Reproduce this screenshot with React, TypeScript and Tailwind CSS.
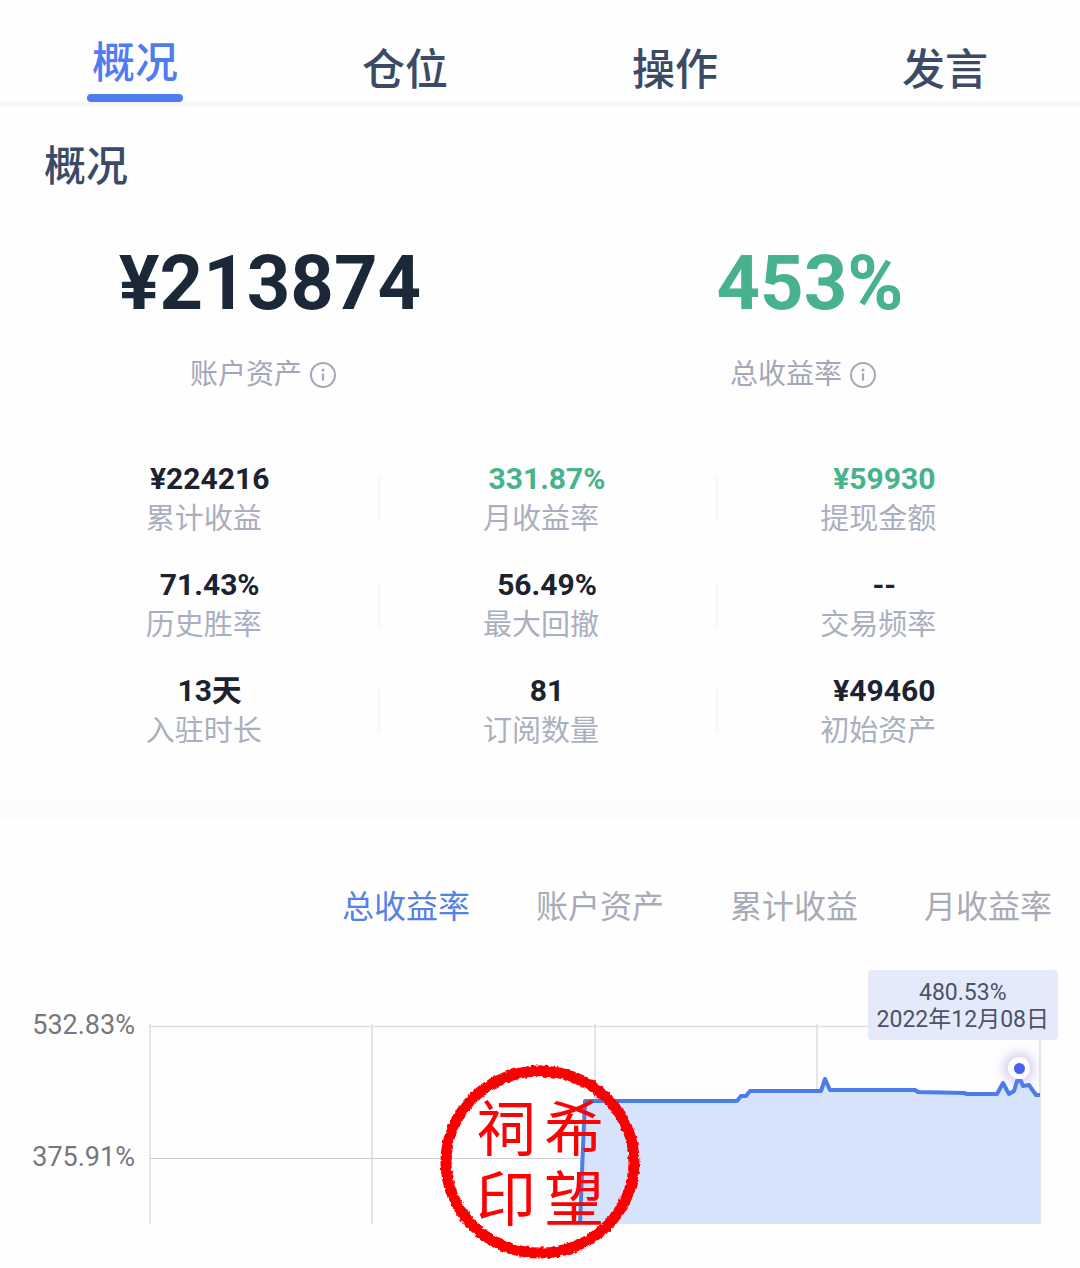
import { useState } from 'react'
import clsx from 'clsx'

interface Stat {
  value: string
  label: string
  positive?: boolean
}

const TABS = ['概况', '仓位', '操作', '发言']
const CHART_TABS = ['总收益率', '账户资产', '累计收益', '月收益率']

const STATS: Stat[] = [
  { value: '¥224216', label: '累计收益' },
  { value: '331.87%', label: '月收益率', positive: true },
  { value: '¥59930', label: '提现金额', positive: true },
  { value: '71.43%', label: '历史胜率' },
  { value: '56.49%', label: '最大回撤' },
  { value: '--', label: '交易频率' },
  { value: '13天', label: '入驻时长' },
  { value: '81', label: '订阅数量' },
  { value: '¥49460', label: '初始资产' },
]

// plot space is 890 x 198
const GRID_X = [0, 222, 445, 667, 890]
const LINE =
  '430,198 433,120 435,75 587,75 591,70 596,70 600,65 671,65 675,53 680,64 765,64 768,66 814,67 817,68 847,68 853,57 859,68 864,65 867,55 871,55 873,60 879,59 886,69 890,69'

function InfoIcon() {
  return (
    <svg viewBox="0 0 26 26" className="h-[26px] w-[26px]" fill="none" aria-hidden="true">
      <circle cx="13" cy="13" r="12" stroke="currentColor" strokeWidth="2" />
      <circle cx="13" cy="8" r="1.5" fill="currentColor" />
      <path d="M13 11.5v7" stroke="currentColor" strokeWidth="2.2" />
    </svg>
  )
}

function Headline({ value, label, positive }: Stat) {
  return (
    <div className="flex flex-col items-center">
      <strong
        className={clsx('text-[76px] leading-[86px] font-bold', positive ? 'text-[#47b28b]' : 'text-[#1b2837]')}
      >
        {value}
      </strong>
      <div className="mt-7 flex items-center gap-2 pr-3.5 text-[#a3a8b8]">
        <span className="text-[28px] leading-[42px]">{label}</span>
        <button type="button" aria-label={`${label}说明`}>
          <InfoIcon />
        </button>
      </div>
    </div>
  )
}

function Stamp() {
  return (
    <div className="absolute top-[104px] left-1/2 h-[196px] w-[200px] -translate-x-1/2 text-[#fb0204]">
      <svg viewBox="0 0 200 196" className="absolute inset-0 h-full w-full overflow-visible" fill="none">
        <filter id="rough" x="-5%" y="-5%" width="110%" height="110%">
          <feTurbulence type="fractalNoise" baseFrequency="0.25" numOctaves="3" seed="4" />
          <feDisplacementMap in="SourceGraphic" scale="4" xChannelSelector="R" yChannelSelector="G" />
        </filter>
        <ellipse cx="100" cy="98" rx="94" ry="91" stroke="currentColor" strokeWidth="11" filter="url(#rough)" />
      </svg>
      <div className="relative grid h-full grid-cols-[68px_68px] grid-rows-[70px_70px] place-content-center place-items-center pt-2 text-[60px] leading-none">
        <span>祠</span>
        <span>希</span>
        <span>印</span>
        <span>望</span>
      </div>
    </div>
  )
}

function Chart() {
  return (
    <div className="relative flex h-[308px] pt-[66px] pr-10">
      <div className="w-[150px] pr-[15px] text-right text-[27px] text-[#76787d]">
        <div className="-mt-5 h-[132px] leading-[38px]">532.83%</div>
        <div className="leading-[38px]">375.91%</div>
      </div>
      <div className="relative h-[198px] flex-1">
        <svg viewBox="0 0 890 198" preserveAspectRatio="none" className="h-full w-full overflow-visible">
          <g stroke="#dfdfe2" strokeWidth="1.6">
            {GRID_X.map((x) => (
              <line key={x} x1={x} x2={x} y1="-2" y2="198" />
            ))}
            <line x1="0" x2="890" y1="0.5" y2="0.5" />
            <line x1="0" x2="890" y1="132.5" y2="132.5" stroke="#cfcfd2" strokeWidth="1.2" />
          </g>
          <polygon points={`${LINE} 890,198`} fill="#d6e3fa" />
          <polyline points={LINE} fill="none" stroke="#4a7de9" strokeWidth="4" strokeLinejoin="round" />
        </svg>
        {/* Selected point */}
        <div className="absolute top-[31px] right-[10px] flex h-[22px] w-[22px] items-center justify-center rounded-full bg-white shadow-[0_0_12px_4px_rgba(150,120,220,0.4)]">
          <span className="h-[11px] w-[11px] rounded-full bg-[#4b5fee]" />
        </div>
        <div className="absolute -top-14 -right-[18px] rounded-sm bg-[#e4eafa] px-[9px] pt-[9px] pb-[7px] text-center text-[23px] leading-[27px] whitespace-nowrap text-[#4b5365]">
          <div>480.53%</div>
          <div>2022年12月08日</div>
        </div>
      </div>
      <Stamp />
    </div>
  )
}

export default function App() {
  const [tab, setTab] = useState(TABS[0])
  const [chartTab, setChartTab] = useState(CHART_TABS[0])

  return (
    <main className="min-h-screen bg-[#fefefe] font-['Roboto','Noto_Sans_CJK_SC',sans-serif]">
      <nav className="grid h-[106px] grid-cols-4 border-b-4 border-[#f5f7fa]">
        {TABS.map((t) => (
          <button
            key={t}
            type="button"
            onClick={() => setTab(t)}
            className={clsx(
              'flex flex-col items-center text-[43px] leading-[60px] font-medium',
              t === tab ? 'pt-[33px] text-[#4f7cf3]' : 'pt-10 text-[#3b4a66]',
            )}
          >
            {t}
            {t === tab && <span className="mt-px h-2 w-24 shrink-0 rounded-full bg-[#4f7cf3]" />}
          </button>
        ))}
      </nav>

      <section className="pb-[49px]">
        <h2 className="px-11 pt-[31px] text-[42px] leading-[60px] font-medium text-[#3b4a66]">概况</h2>
        <div className="mt-[43px] grid grid-cols-2">
          <Headline value="¥213874" label="账户资产" />
          <Headline value="453%" label="总收益率" positive />
        </div>

        <div className="mt-[63px] grid grid-cols-3 gap-y-[26px] pr-6 pl-11">
          {STATS.map((s, i) => (
            <div key={s.label} className="flex items-center">
              <div className="flex-1 pr-3.5 text-center">
                <div
                  className={clsx(
                    'pl-3 text-[30px] leading-10 font-bold',
                    s.positive ? 'text-[#47b28b]' : 'text-[#1b2230]',
                  )}
                >
                  {s.value}
                </div>
                <div className="text-[29px] leading-10 text-[#aaafc0]">{s.label}</div>
              </div>
              <span className={clsx('h-11 w-1', i % 3 < 2 && 'bg-[#f8f8fb]')} />
            </div>
          ))}
        </div>
      </section>

      <div className="h-5 bg-[#fcfcfd]" />

      <section>
        <div className="flex justify-end gap-[66px] pt-[67px] pr-7 pb-[33px]">
          {CHART_TABS.map((t) => (
            <button
              key={t}
              type="button"
              onClick={() => setChartTab(t)}
              className={clsx('text-[32px] leading-10', t === chartTab ? 'text-[#5580e8]' : 'text-[#a8abb6]')}
            >
              {t}
            </button>
          ))}
        </div>
        <Chart />
      </section>
    </main>
  )
}
